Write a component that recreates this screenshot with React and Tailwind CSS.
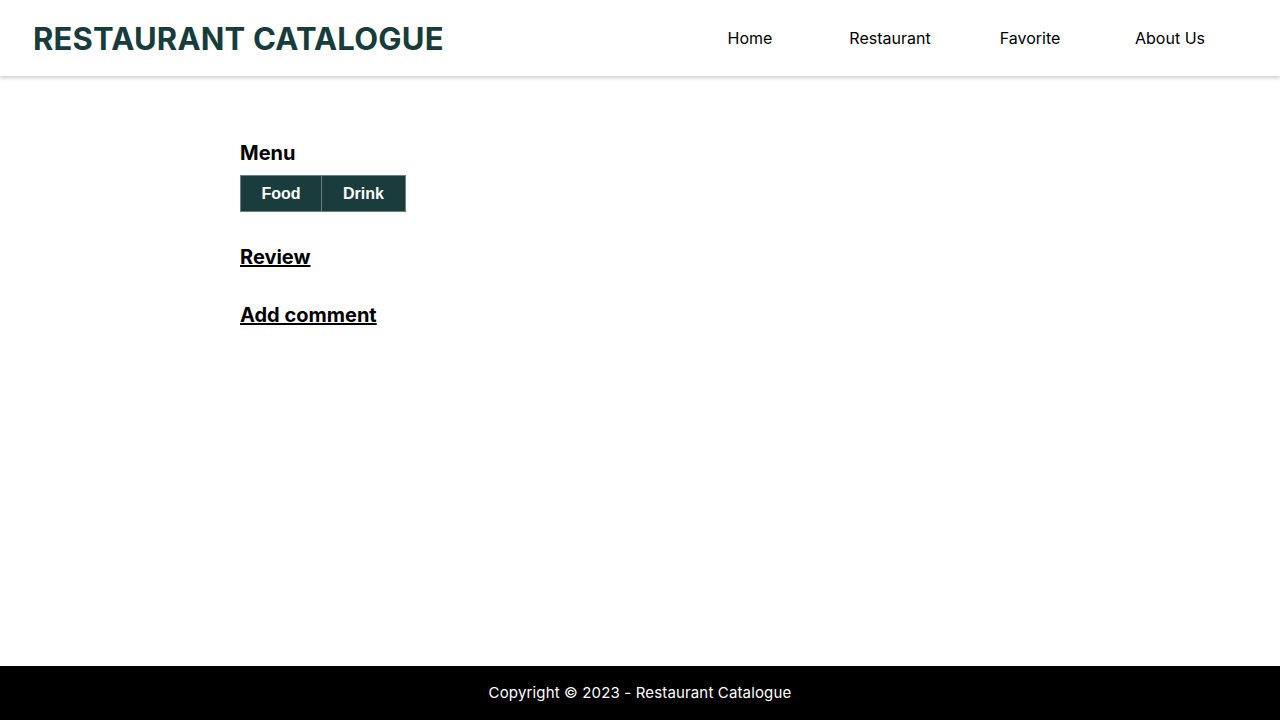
import React from 'react';

const NAV = ['Home', 'Restaurant', 'Favorite', 'About Us'];

const App = () => {
  return (
    <div className="min-h-screen flex flex-col bg-white text-black font-['Inter',sans-serif]">
      {/* header */}
      <header className="h-[76px] flex items-center justify-between pl-[33px] pr-[40px] bg-white shadow-[0_2px_4px_rgba(0,0,0,0.2)] relative z-10">
        <h1 className="text-[31px] font-bold text-[#173c3c] tracking-[0.2px] pt-[2px]">RESTAURANT CATALOGUE</h1>
        <nav className="flex">
          {NAV.map((item) => (
            <a key={item} href="#" className="w-[140px] text-center text-[16px] text-black">
              {item}
            </a>
          ))}
        </nav>
      </header>

      {/* main */}
      <main className="flex-1 px-[240px] pt-[65px]">
        <h2 className="text-[20px] font-bold leading-[24px]">Menu</h2>
        <div className="flex mt-[10px]">
          <button className="w-[82px] h-[37px] bg-[#1a3c3c] border border-[#6f8080] text-white font-bold text-[16px] font-['Liberation_Sans',Arial,sans-serif]">
            Food
          </button>
          <button className="w-[84px] h-[37px] bg-[#1a3c3c] border border-l-0 border-[#6f8080] text-white font-bold text-[16px] font-['Liberation_Sans',Arial,sans-serif]">
            Drink
          </button>
        </div>
        <h2 className="mt-[33px] text-[20px] font-bold underline leading-[24px]">Review</h2>
        <h2 className="mt-[34px] text-[20px] font-bold underline leading-[24px]">Add comment</h2>
      </main>

      {/* footer */}
      <footer className="h-[54px] flex items-center justify-center bg-black text-white text-[15px] tracking-[0.15px]">
        Copyright © 2023 - Restaurant Catalogue
      </footer>
    </div>
  );
};

export default App;
